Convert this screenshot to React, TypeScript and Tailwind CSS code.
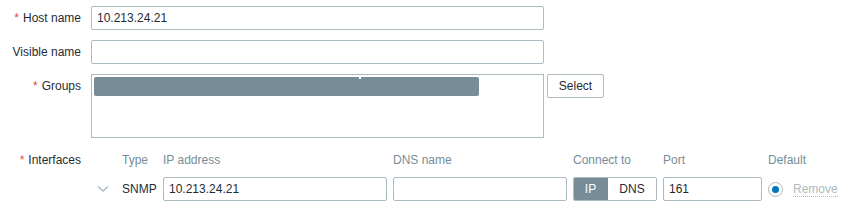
import React from 'react';

const inputCls =
  'h-[24px] border border-[#acbbc2] rounded-[2px] bg-white px-[5px] text-[12px] text-[#1f2c33] outline-none';

function Label({ text, required }: { text: string; required?: boolean }) {
  return (
    <div className="w-[81px] shrink-0 text-right leading-[24px] text-[#1f2c33]">
      {required && <span className="text-[#d64e4e] mr-[4px]">*</span>}
      {text}
    </div>
  );
}

export default function App() {
  return (
    <div
      className="w-[849px] h-[209px] bg-white pt-[6px] text-[12px]"
      style={{ fontFamily: '"Liberation Sans", Arial, sans-serif' }}
    >
      <div className="flex">
        <Label text="Host name" required />
        <input className={`${inputCls} ml-[10px] w-[453px]`} defaultValue="10.213.24.21" />
      </div>

      <div className="flex mt-[10px]">
        <Label text="Visible name" />
        <input className={`${inputCls} ml-[10px] w-[453px]`} defaultValue="" />
      </div>

      <div className="flex mt-[10px]">
        <Label text="Groups" required />
        <div className="ml-[10px] w-[453px] h-[64px] border border-[#acbbc2] bg-white pt-[2px] pl-[2px]">
          <div className="relative w-[385px] h-[19px] bg-[#768d99] rounded-[2px]">
            <div className="absolute left-[265px] top-0 w-[2px] h-[2px] bg-white" />
          </div>
        </div>
        <button className="ml-[3px] h-[24px] w-[57px] border border-[#acbbc2] rounded-[2px] bg-white text-[#1f2c33] text-[12px]">
          Select
        </button>
      </div>

      <div className="flex mt-[10px]">
        <Label text="Interfaces" required />
        <div className="ml-[10px] grid grid-cols-[31px_41px_230px_180px_90px_105px_auto] text-[#768d99]">
          <div className="leading-[24px]" />
          <div className="leading-[24px]">Type</div>
          <div className="leading-[24px]">IP address</div>
          <div className="leading-[24px]">DNS name</div>
          <div className="leading-[24px]">Connect to</div>
          <div className="leading-[24px]">Port</div>
          <div className="leading-[24px]">Default</div>

          <div className="mt-[5px] flex items-center h-[24px] pl-[6px]">
            <svg width="12" height="8" viewBox="0 0 12 8">
              <path d="M1 1.5 L6 6 L11 1.5" fill="none" stroke="#acbbc2" strokeWidth="1.6" />
            </svg>
          </div>
          <div className="mt-[5px] leading-[24px] text-[#1f2c33]">SNMP</div>
          <div className="mt-[5px]">
            <input className={`${inputCls} w-[224px]`} defaultValue="10.213.24.21" />
          </div>
          <div className="mt-[5px]">
            <input className={`${inputCls} w-[174px]`} defaultValue="" />
          </div>
          <div className="mt-[5px] flex h-[24px] w-[84px] border border-[#acbbc2] rounded-[2px] overflow-hidden">
            <div className="w-[35px] bg-[#768d99] text-white flex items-center justify-center -my-px -ml-px">IP</div>
            <div className="flex-1 bg-white text-[#1f2c33] flex items-center justify-center">DNS</div>
          </div>
          <div className="mt-[5px]">
            <input className={`${inputCls} w-[99px]`} defaultValue="161" />
          </div>
          <div className="mt-[5px] flex items-center h-[24px]">
            <div className="w-[15px] h-[15px] rounded-full border border-[#acbbc2] flex items-center justify-center bg-white">
              <div className="w-[7px] h-[7px] rounded-full bg-[#0275b8]" />
            </div>
            <span className="ml-[10px] text-[#acbbc2] border-b border-dotted border-[#acbbc2] leading-[14px]">
              Remove
            </span>
          </div>
        </div>
      </div>
    </div>
  );
}
